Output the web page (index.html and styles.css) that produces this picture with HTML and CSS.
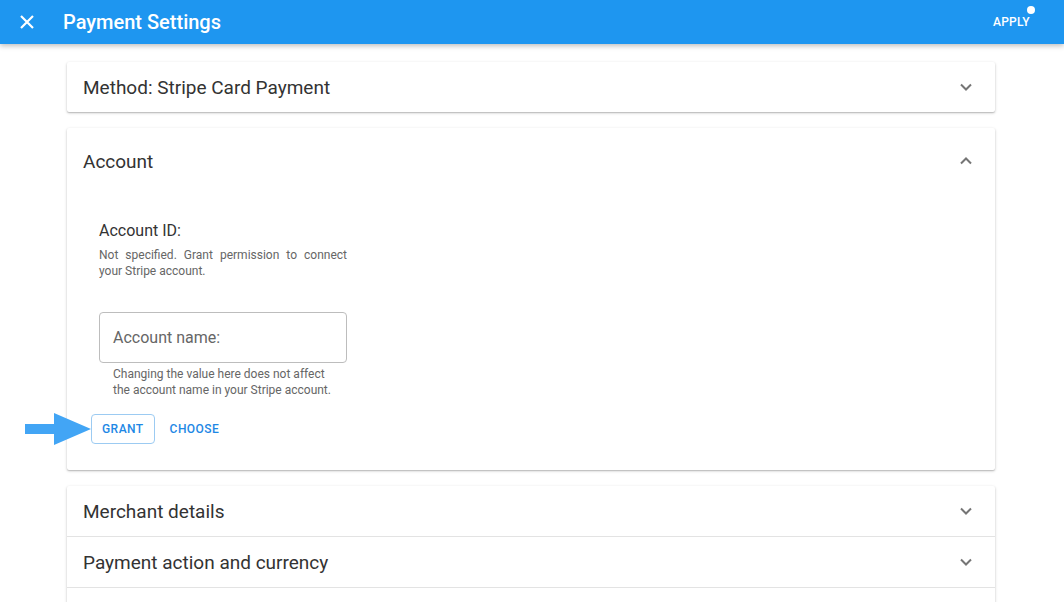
FILE: index.html
```html
<!DOCTYPE html>
<html lang="en">
<head>
    <meta charset="UTF-8">
    <title>Payment Settings</title>
    <link rel="stylesheet" href="styles.css">
</head>
<body>

    <!-- Header -->
    <header class="topbar">
        <span class="close-btn">
            <svg width="16" height="16" viewBox="0 0 16 16"><path d="M2 2 L14 14 M14 2 L2 14" stroke="#fff" stroke-width="2.2" fill="none"/></svg>
        </span>
        <h1 class="title">Payment Settings</h1>
        <span class="apply">APPLY<span class="dot"></span></span>
    </header>

    <!-- Panels -->
    <div class="content">
        <div class="panel">
            <div class="panel-head">
                <span>Method: Stripe Card Payment</span>
                <svg class="chev" width="14" height="14" viewBox="0 0 14 14"><path d="M2 4.5 L7 9.5 L12 4.5" stroke="#757575" stroke-width="2" fill="none"/></svg>
            </div>
        </div>

        <div class="panel open">
            <div class="panel-head tall">
                <span>Account</span>
                <svg class="chev" width="14" height="14" viewBox="0 0 14 14"><path d="M2 9.5 L7 4.5 L12 9.5" stroke="#757575" stroke-width="2" fill="none"/></svg>
            </div>
            <div class="panel-body">
                <div class="field">
                    <div class="label">Account ID:</div>
                    <p class="desc">Not specified. Grant permission to connect your Stripe account.</p>
                    <div class="input-box">Account name:</div>
                    <p class="hint">Changing the value here does not affect the account name in your Stripe account.</p>
                </div>
                <div class="actions">
                    <svg class="pointer" width="66" height="32" viewBox="0 0 66 32"><path d="M0 11 H29 V0 L66 16 L29 32 V21 H0 Z" fill="#42a5f5"/></svg>
                    <button class="btn outlined">GRANT</button>
                    <button class="btn">CHOOSE</button>
                </div>
            </div>
        </div>

        <div class="group">
            <div class="panel-head row">
                <span>Merchant details</span>
                <svg class="chev" width="14" height="14" viewBox="0 0 14 14"><path d="M2 4.5 L7 9.5 L12 4.5" stroke="#757575" stroke-width="2" fill="none"/></svg>
            </div>
            <div class="panel-head row">
                <span>Payment action and currency</span>
                <svg class="chev" width="14" height="14" viewBox="0 0 14 14"><path d="M2 4.5 L7 9.5 L12 4.5" stroke="#757575" stroke-width="2" fill="none"/></svg>
            </div>
            <div class="panel-head row"></div>
        </div>
    </div>

</body>
</html>
```

FILE: styles.css
```css
* {
    margin: 0;
    padding: 0;
    box-sizing: border-box;
}

body {
    font-family: Roboto, "Liberation Sans", sans-serif;
    background-color: #fff;
    color: #333;
    overflow: hidden;
}

/* Top bar */
.topbar {
    height: 44px;
    background-color: #1e96f0;
    color: #fff;
    display: flex;
    align-items: center;
    padding: 0 34px 0 19px;
    box-shadow: 0 2px 5px rgba(0, 0, 0, 0.25);
    position: relative;
    z-index: 2;
}

.close-btn {
    display: flex;
    width: 16px;
    height: 16px;
}

.title {
    font-size: 20px;
    font-weight: 500;
    margin-left: 28px;
    flex: 1;
}

.apply {
    font-size: 12px;
    font-weight: 500;
    position: relative;
    letter-spacing: 0.3px;
}

.apply .dot {
    position: absolute;
    right: -5px;
    top: -9px;
    width: 8px;
    height: 8px;
    border-radius: 50%;
    background-color: #fff;
}

/* Panels */
.content {
    width: 928px;
    margin: 18px 0 0 67px;
}

.panel,
.group {
    background-color: #fff;
    box-shadow: 0 1px 3px rgba(0, 0, 0, 0.22), 0 1px 1px rgba(0, 0, 0, 0.12);
    border-radius: 2px;
    margin-bottom: 16px;
}

.panel-head {
    height: 50px;
    display: flex;
    align-items: center;
    justify-content: space-between;
    padding: 0 22px 0 16px;
    font-size: 19px;
    color: #333;
}

.panel-head.tall {
    height: 66px;
}

.panel-head.row {
    height: 51px;
    border-bottom: 1px solid #e3e3e3;
}

.panel-body {
    padding: 27px 24px 26px;
}

.field {
    width: 248px;
    margin-left: 8px;
}

.label {
    font-size: 16px;
    color: #333;
    line-height: 20px;
}

.desc {
    font-size: 12px;
    line-height: 16px;
    color: #666;
    text-align: justify;
    margin-top: 6px;
}

.input-box {
    margin-top: 33px;
    height: 51px;
    border: 1px solid #bdbdbd;
    border-radius: 4px;
    padding: 0 13px;
    display: flex;
    align-items: center;
    font-size: 16px;
    color: #666;
}

.hint {
    font-size: 12px;
    line-height: 16px;
    color: #666;
    padding: 3px 14px 0;
}

.actions {
    display: flex;
    align-items: center;
    gap: 6px;
    margin-top: 16px;
    position: relative;
}

.pointer {
    position: absolute;
    left: -66px;
    top: -1px;
}

.btn {
    font-family: inherit;
    font-size: 12px;
    font-weight: 500;
    color: #1e88e5;
    background: none;
    border: 1px solid transparent;
    border-radius: 4px;
    height: 30px;
    padding: 0 8px;
    letter-spacing: 0.45px;
}

.btn.outlined {
    border-color: #9ccbf2;
    padding: 0 10px;
}
```
